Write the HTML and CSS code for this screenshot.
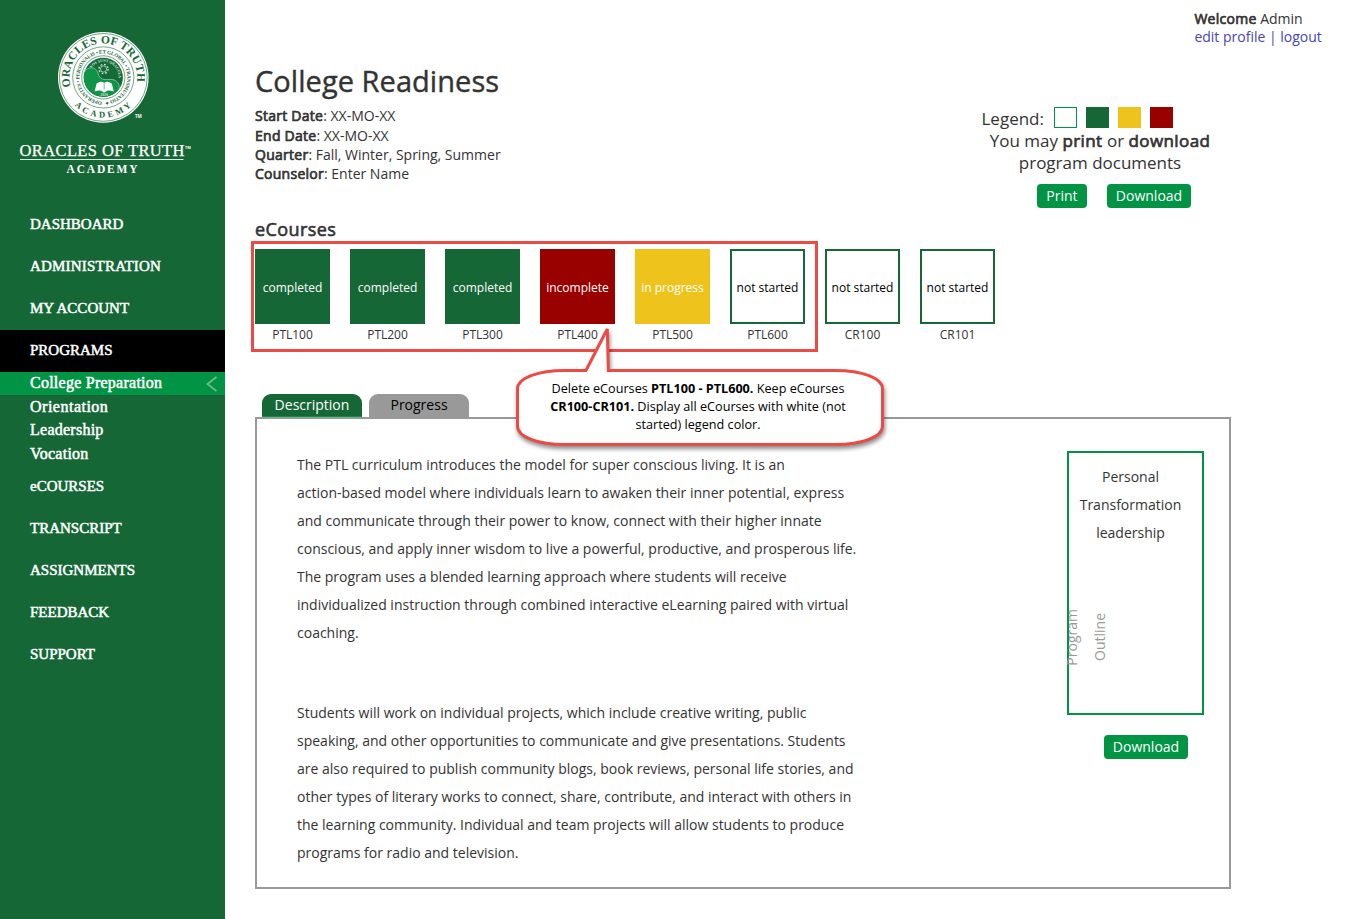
FILE: index.html
```
<!DOCTYPE html>
<html lang="en">
<head>
<meta charset="utf-8">
<title>College Readiness</title>
<link rel="stylesheet" href="styles.css">
</head>
<body>
<div class="page">
  <aside class="sidebar">
    <svg class="brand" width="225" height="203" viewBox="0 0 225 203">
      <defs>
        <path id="ring-top" d="M70.8 86.6A33.8 33.8 0 1 1 135.8 86.6"/>
        <path id="ring-bottom" d="M74.6 105.4A40 40 0 0 0 132 105.4"/>
        <path id="ring-motto" d="M102 101.3A23.9 23.9 0 1 1 104.6 101.3"/>
        <path id="ring-inner" d="M91.3 68.2A15 15 0 0 1 118 81"/>
      </defs>
      <circle cx="103.3" cy="77.4" r="45.3" fill="#fff"/>
      <circle cx="103.3" cy="77.4" r="43.9" class="ring"/>
      <circle cx="103.3" cy="77.4" r="30.6" class="ring"/>
      <circle cx="103.3" cy="77.4" r="21.6" class="ring"/>
      <circle cx="103.3" cy="77.4" r="19.6" fill="#146b37"/>
      <path d="M84.4 72.4C87 66 96 66 98 73C100 82 107 79 112 79.5C117 80 120 84 119 89A19.6 19.6 0 0 1 84.4 72.4Z" fill="#0f9447"/>
      <path d="M84.4 72.4C87 66 96 66 98 73C100 82 107 79 112 79.5C117 80 120 84 119 89" class="swirl"/>
      <circle cx="103.5" cy="69" r="4.6" class="sun"/>
      <circle cx="103.5" cy="69" r="3.1" fill="none" stroke="#d5e6da" stroke-width=".7"/>
      <path d="M94.6 91.5L96.6 83.4Q101 80.5 104.2 83Q107.4 80.5 111.8 83.4L113.8 91.5Q108 89.4 106 91.4Q104.2 93.5 102.4 91.4Q100.4 89.4 94.6 91.5Z" fill="#fff"/>
      <path d="M104.2 83.2V89.5" stroke="#149449" stroke-width=".6"/>
      <text class="seal" font-size="11.5" textLength="120"><textPath href="#ring-top">ORACLES OF TRUTH</textPath></text>
      <text class="seal" font-size="8.6" letter-spacing="3"><textPath href="#ring-bottom">ACADEMY</textPath></text>
      <text class="seal" font-size="5.2" textLength="147"><textPath href="#ring-motto">OPERANTES • PERSONALIS • ET GLOBAL • TRANSMUTATIO ✦</textPath></text>
      <text class="seal light" font-size="3.8"><textPath href="#ring-inner">NOS SUNT ORACULA</textPath></text>
      <text class="seal light" x="100.3" y="96" font-size="3.8">2010</text>
      <text class="tm" x="135" y="118" font-size="4.5">TM</text>
      <text class="wordmark" x="19.5" y="156" font-size="16.5" textLength="165">ORACLES OF TRUTH</text>
      <text class="tm" x="185" y="149" font-size="3.8">TM</text>
      <rect x="20" y="159" width="163.5" height="1" fill="#dcebe1"/>
      <text class="wordmark strong" x="66.5" y="172.7" font-size="11.5" textLength="71">ACADEMY</text>
    </svg>
    <nav class="nav">
      <a>DASHBOARD</a>
      <a class="wide">ADMINISTRATION</a>
      <a>MY ACCOUNT</a>
      <a class="current">PROGRAMS</a>
      <div class="subnav">
        <a class="selected">College Preparation
          <svg width="12" height="16" viewBox="0 0 12 16"><path d="M10.5 1L1.5 8L10.5 15"/></svg>
        </a>
        <a class="wide">Orientation</a>
        <a>Leadership</a>
        <a>Vocation</a>
      </div>
      <a>eCOURSES</a>
      <a>TRANSCRIPT</a>
      <a>ASSIGNMENTS</a>
      <a>FEEDBACK</a>
      <a>SUPPORT</a>
    </nav>
  </aside>

  <main class="main">
    <div class="account">
      <div><b>Welcome</b> Admin</div>
      <div class="links">edit profile | logout</div>
    </div>

    <header class="head">
      <div>
        <h1>College Readiness</h1>
        <div class="info">
          <div><b>Start Date</b>: XX-MO-XX</div>
          <div><b>End Date</b>: XX-MO-XX</div>
          <div><b>Quarter</b>: Fall, Winter, Spring, Summer</div>
          <div><b>Counselor</b>: Enter Name</div>
        </div>
      </div>
      <div class="documents">
        <div class="legend">Legend:
          <span class="swatches"><i class="open"></i><i class="green"></i><i class="yellow"></i><i class="red"></i></span>
        </div>
        <p>You may <b>print</b> or <b>download</b><br>program documents</p>
        <div class="actions"><a class="button print">Print</a><a class="button">Download</a></div>
      </div>
    </header>

    <section class="courses">
      <h2>eCourses</h2>
      <div class="tiles">
        <div class="tile"><div class="box green">completed</div>PTL100</div>
        <div class="tile"><div class="box green">completed</div>PTL200</div>
        <div class="tile"><div class="box green">completed</div>PTL300</div>
        <div class="tile"><div class="box red">incomplete</div>PTL400</div>
        <div class="tile"><div class="box yellow">in progress</div>PTL500</div>
        <div class="tile"><div class="box open">not started</div>PTL600</div>
        <div class="tile"><div class="box open">not started</div>CR100</div>
        <div class="tile"><div class="box open">not started</div>CR101</div>
      </div>
      <div class="marker"></div>
      <div class="callout">
        <svg width="400" height="140" viewBox="500 320 400 140">
          <path d="M565 370.5H586L607.3 329L608.3 370.5H835C862 370.5 882.5 378 882.5 389V426C882.5 437 862 444.5 835 444.5H565C538 444.5 517.5 437 517.5 426V389C517.5 378 538 370.5 565 370.5Z"/>
        </svg>
        <p>Delete eCourses <strong>PTL100 - PTL600.</strong> Keep eCourses<br><strong>CR100-CR101.</strong> Display all eCourses with white (not<br>started) legend color.</p>
      </div>
    </section>

    <div class="tabs"><a class="tab active">Description</a><a class="tab">Progress</a></div>
    <section class="panel">
      <div class="copy">
        <p>The PTL curriculum introduces the model for super conscious living. It is an<br>action-based model where individuals learn to awaken their inner potential, express<br>and communicate through their power to know, connect with their higher innate<br>conscious, and apply inner wisdom to live a powerful, productive, and prosperous life.<br>The program uses a blended learning approach where students will receive<br>individualized instruction through combined interactive eLearning paired with virtual<br>coaching.</p>
        <p>Students will work on individual projects, which include creative writing, public<br>speaking, and other opportunities to communicate and give presentations. Students<br>are also required to publish community blogs, book reviews, personal life stories, and<br>other types of literary works to connect, share, contribute, and interact with others in<br>the learning community. Individual and team projects will allow students to produce<br>programs for radio and television.</p>
      </div>
      <div class="side">
        <div class="card">Personal<br>Transformation<br>leadership
          <div class="outline">Program<br>Outline</div>
        </div>
        <a class="button">Download</a>
      </div>
    </section>
  </main>
</div>
</body>
</html>
```
FILE: styles.css
```
* { box-sizing: border-box; }
body {
  margin: 0;
  background: #fff;
  color: #333;
  font: 14px/19.3px "Open Sans", sans-serif;
}
h1, h2, p { margin: 0; font-weight: 400; }
b { font-weight: 400; -webkit-text-stroke: .7px currentColor; letter-spacing: .26px; }
.page { display: flex; height: 919px; overflow: hidden; }

/* Sidebar */
.sidebar { width: 225px; flex: none; background: #166736; }
.brand { display: block; }
.ring { fill: none; stroke: #166736; stroke-width: .6; }
.swirl { fill: none; stroke: #9fd0b2; stroke-width: .7; }
.sun { fill: none; stroke: #d5e6da; stroke-width: 1.3; stroke-dasharray: 1.8 1.813; }
.seal { font-family: "Liberation Serif", serif; font-weight: 700; fill: #166736; }
.light { fill: #d5e6da; }
.tm { font-family: "Open Sans", sans-serif; font-weight: 700; fill: #fff; }
.wordmark { font-family: "Liberation Serif", serif; fill: #fff; stroke: #fff; stroke-width: .25; }
.strong { font-weight: 700; stroke: none; }
.nav { color: #fff; font: 15px/42px "Liberation Serif", serif; -webkit-text-stroke: .5px #fff; }
.nav a { display: block; padding-left: 30px; }
.nav .wide { letter-spacing: .2px; }
.nav .current { height: 43px; background: linear-gradient(#166736 1px, #000 1px); }
.subnav { font-size: 16px; letter-spacing: .25px; }
.subnav a { line-height: 23.4px; }
.subnav .wide { letter-spacing: .5px; }
.subnav .selected {
  display: flex;
  justify-content: space-between;
  align-items: center;
  height: 23px;
  padding: 0 7px 2px 30px;
  background: #009444;
  line-height: 21px;
}
.subnav svg { fill: none; stroke: #72b78b; stroke-width: 1.8; margin-top: 2px; }

/* Header */
.main { flex: 1; padding-left: 30px; }
.account { height: 61px; width: 157.6px; margin-left: auto; padding-top: 10px; line-height: 18px; }
.links { color: #4644b4; }
.head { display: flex; justify-content: space-between; width: 965px; height: 156px; }
h1 { font-size: 29px; line-height: 38px; padding: 1px 0 6px; letter-spacing: .05px; -webkit-text-stroke: .4px #333; }
.info { padding-top: .3px; }
.documents { width: 240px; padding-top: 46px; font-size: 17px; line-height: 22px; text-align: center; }
.documents p { padding-top: 1px; }
.documents b { letter-spacing: .4px; }
.legend { display: flex; gap: 10px; padding-left: 1.5px; height: 22px; line-height: 24px; }
.swatches { display: flex; gap: 9px; }
.swatches i { width: 23px; height: 21px; }
.swatches .open { border: 1px solid #009444; }
.green { background: #166736; color: #fff; }
.red { background: #900; color: #fff; }
.yellow { background: #eec41c; color: #fff; }
.actions { display: flex; gap: 20px; padding: 10px 0 0 57px; }
.button {
  display: block;
  width: 84px;
  height: 24px;
  border-radius: 4px;
  background: #009444;
  color: #fff;
  font-size: 14px;
  line-height: 24px;
  text-align: center;
}
.button.print { width: 50px; }

/* Course tiles */
.courses { position: relative; height: 177px; }
h2 { font-size: 18px; line-height: 24px; letter-spacing: .4px; padding-bottom: 8px; -webkit-text-stroke: .6px #333; }
.tiles { display: flex; gap: 20px; }
.tile { width: 75px; font-size: 12px; line-height: 21px; text-align: center; }
.box { height: 75px; line-height: 77px; }
.box.open { border: 2px solid #166736; line-height: 73px; color: #000; }
.marker { position: absolute; left: -4px; top: 24px; width: 567px; height: 111px; border: 3px solid #eb4a45; }
.callout { position: absolute; left: 245px; top: 103px; z-index: 2; width: 400px; height: 140px; }
.callout svg { position: absolute; inset: 0; fill: #fff; stroke: #eb4a45; stroke-width: 3; filter: drop-shadow(1px 3px 2px rgba(0, 0, 0, .45)); }
.callout p {
  position: absolute;
  inset: 59px 4px auto 0;
  color: #000;
  font-size: 12.65px;
  line-height: 18px;
  text-align: center;
  white-space: nowrap;
}

/* Description panel */
.tabs { display: flex; gap: 7px; padding-left: 7px; }
.tab { width: 100px; height: 23px; border-radius: 9px 9px 0 0; background: #999; color: #000; line-height: 22px; text-align: center; }
.tab.active { background: linear-gradient(#166736 22px, #009444 22px); color: #fff; }
.panel { display: flex; justify-content: space-between; width: 976px; height: 472px; border: 2px solid #999; padding: 32px 25px 0 40px; line-height: 28px; }
.copy p + p { margin-top: 52px; }
.copy { white-space: nowrap; }
.side { width: 137px; }
.card { position: relative; height: 264px; border: 2px solid #009444; padding: 10px 10px 0 0; text-align: center; }
.outline { position: absolute; left: -11px; top: 156px; color: #999; writing-mode: sideways-lr; }
.side .button { margin: 20px 0 0 37px; }
```
